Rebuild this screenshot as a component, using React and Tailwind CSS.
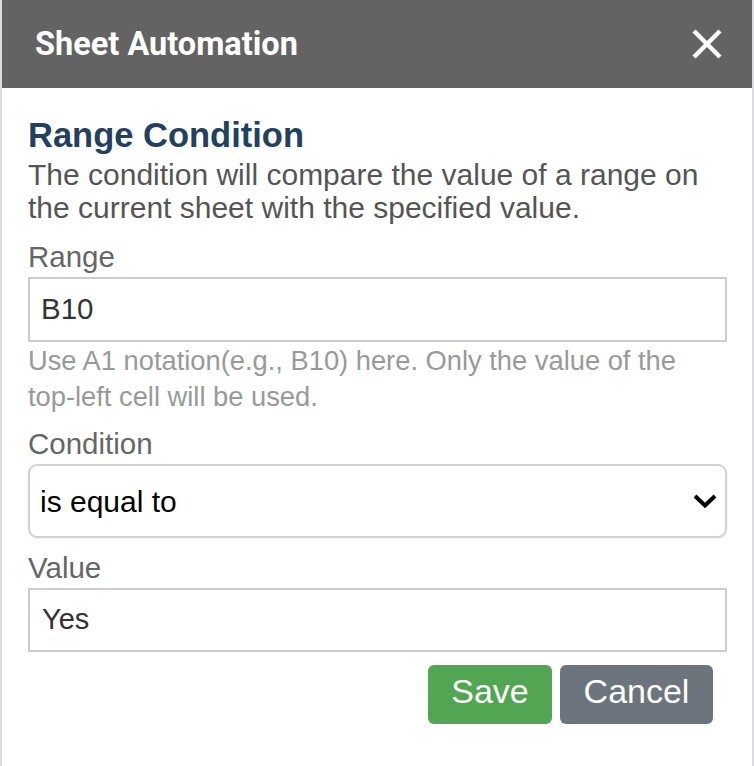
export default function App() {
  return (
    <div className="min-h-screen bg-white border-x-2 border-[#dcdce0] font-['Liberation_Sans',Arial,sans-serif]">
      <header className="h-[88px] bg-[#636363] flex items-center justify-between pl-[33px] pr-[30px]">
        <h1 className="font-['Roboto',sans-serif] font-bold text-[32.5px] leading-none text-white">
          Sheet Automation
        </h1>
        <svg width="30" height="30" viewBox="0 0 30 30" className="block">
          <line x1="2" y1="2" x2="28" y2="28" stroke="white" strokeWidth="4.5" />
          <line x1="28" y1="2" x2="2" y2="28" stroke="white" strokeWidth="4.5" />
        </svg>
      </header>

      <div className="pl-[26px] pr-[25px]">
        <h2 className="mt-[27px] text-[34.5px] leading-[40px] font-bold text-[#23405f]">
          Range Condition
        </h2>
        <p className="mt-[3px] text-[30px] leading-[33px] text-[#555555]">
          The condition will compare the value of a range on
          <br />
          the current sheet with the specified value.
        </p>

        <div className="mt-[16px] text-[29.5px] leading-[34px] text-[#666666]">Range</div>
        <div className="mt-[3px] h-[65px] border-2 border-[#cccccc] flex items-center pl-[11px] text-[29.5px] text-[#333333]">
          B10
        </div>
        <p className="mt-[1px] text-[27.3px] leading-[36px] text-[#999999]">
          Use A1 notation(e.g., B10) here. Only the value of the top-left cell will be used.
        </p>

        <div className="mt-[12px] text-[29.5px] leading-[34px] text-[#666666]">Condition</div>
        <div className="mt-[3px] h-[74px] border-2 border-[#d2d2d2] rounded-[9px] shadow-[0_1px_2px_rgba(0,0,0,0.08)] flex items-center justify-between pl-[10px] pr-[8px] text-[30px] text-black">
          <span>is equal to</span>
          <svg width="24" height="14" viewBox="0 0 24 14" className="block">
            <polyline points="2,2 12,11.5 22,2" fill="none" stroke="black" strokeWidth="4" />
          </svg>
        </div>

        <div className="mt-[13px] text-[29.5px] leading-[34px] text-[#666666]">Value</div>
        <div className="mt-[3px] h-[64px] border-2 border-[#cccccc] flex items-center pl-[12px] text-[29px] text-[#333333]">
          Yes
        </div>

        <div className="mt-[13px] flex justify-end gap-[8px] pr-[14px]">
          <button className="w-[124px] h-[59px] rounded-[6px] bg-[#52a552] text-white text-[34px] flex items-center justify-center pb-[6px]">
            Save
          </button>
          <button className="w-[153px] h-[59px] rounded-[6px] bg-[#6c757d] text-white text-[34px] flex items-center justify-center pb-[6px]">
            Cancel
          </button>
        </div>
      </div>
    </div>
  );
}
